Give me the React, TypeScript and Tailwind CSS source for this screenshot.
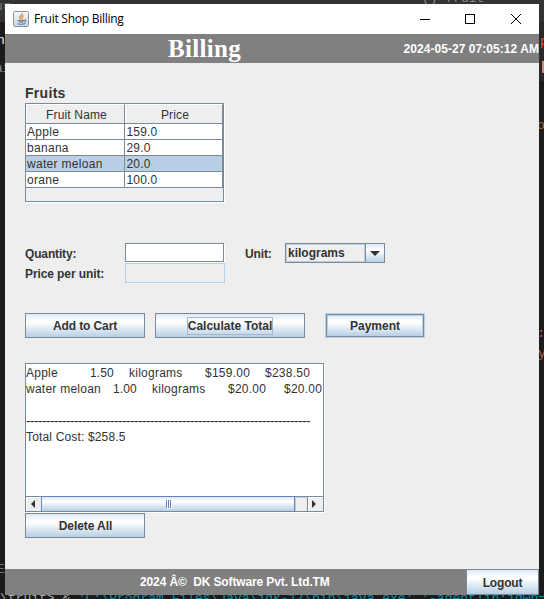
import type { ReactNode } from "react";

const fruits = [
  { name: "Apple", price: "159.0" },
  { name: "banana", price: "29.0" },
  { name: "water meloan", price: "20.0", selected: true },
  { name: "orane", price: "100.0" },
];

const metal = "bg-[linear-gradient(#dde8f3_0%,#ffffff_30%,#ffffff_36%,#b8cfe5_100%)]";

function Button({ className, children }: { className: string; children: ReactNode }) {
  return (
    <button className={`flex items-center justify-center border border-[#7a8a99] font-bold whitespace-nowrap ${metal} ${className}`}>
      {children}
    </button>
  );
}

function JavaIcon() {
  return (
    <svg className="mr-[5px] h-4 w-4" viewBox="0 0 16 16" fill="none">
      <defs>
        <linearGradient id="tile" x1="0" y1="0" x2="0" y2="1">
          <stop offset="0" stopColor="#fafafa" />
          <stop offset="1" stopColor="#cbd5dc" />
        </linearGradient>
      </defs>
      <rect x=".5" y=".5" width="15" height="15" rx="1" fill="url(#tile)" stroke="#8297a6" />
      <path d="M9.3 2.2C9.8 4 6 4.8 6.5 6.4c.2.8 1.4 1.3 1 2.3M10.8 4.6C9 5.4 8.2 6 9 7c.3.5.2 1-.5 1.6" stroke="#e8852d" strokeWidth="1.2" />
      <path d="M4.8 9.2c-1 .6 5 .7 6.5 0M5.6 11h4.8M11.4 9.1c2.3-.3 1.7 1.7 0 2M4.5 12.6c1.5.9 6 .8 8-.1" stroke="#587b98" strokeWidth="1.1" />
    </svg>
  );
}

function TitleBar() {
  return (
    <div className="flex h-[30px] items-center bg-white pl-2 text-black">
      <JavaIcon />
      <span className="grow font-['Open_Sans','Noto_Sans',sans-serif] text-[12px] tracking-[-0.26px]">Fruit Shop Billing</span>
      <svg className="mr-[18px] h-[10px] w-[102px]" viewBox="0 0 102 10" fill="none" stroke="#000" shapeRendering="crispEdges">
        <path d="M1 5.5h10M46.5.5h9v9h-9z" />
        <path d="M92 0l10 10M102 0L92 10" shapeRendering="auto" />
      </svg>
    </div>
  );
}

function FruitTable() {
  return (
    <div className="h-[99px] w-[199px] border border-[#7a8a99] shadow-[1px_1px_0_#fff]">
      <div className="flex h-5 border-b border-[#7a8a99] text-center leading-[21px]">
        <div className="w-[99px] border-t border-r border-l border-t-white border-r-[#7a8a99] border-l-white pl-0.5 tracking-[0.15px]">Fruit Name</div>
        <div className="grow border-t border-r border-l border-t-white border-r-[#7a8a99] border-l-white pl-0.5 tracking-[0.15px]">Price</div>
      </div>
      {fruits.map((f) => (
        <div key={f.name} className={`flex h-4 border-b border-[#7a8a99] leading-4 ${f.selected ? "bg-[#b8cfe5]" : "bg-white"}`}>
          <div className="w-[99px] border-r border-[#7a8a99] pl-px tracking-[0.3px]">{f.name}</div>
          <div className="grow border-r border-[#7a8a99] pl-[1.5px] tracking-[0.15px]">{f.price}</div>
        </div>
      ))}
    </div>
  );
}

function Cart() {
  return (
    <div className="flex h-[149px] w-[299px] flex-col border border-[#7a8a99] bg-white shadow-[1px_1px_0_#fff]">
      <div className="h-[132px] shrink-0 overflow-hidden pt-px leading-4 tracking-[0.25px] whitespace-nowrap">
        <div className="flex h-4">
          <span className="w-[64px]">Apple</span><span className="w-[39px] tracking-[0.1px]">1.50</span><span className="w-[76px]">kilograms</span>
          <span className="w-[60px]">$159.00</span><span>$238.50</span>
        </div>
        <div className="flex h-4">
          <span className="w-[87px]">water meloan</span><span className="w-[39px] tracking-[0.1px]">1.00</span><span className="w-[76px]">kilograms</span>
          <span className="w-[56px]">$20.00</span><span>$20.00</span>
        </div>
        <div className="h-4" />
        <div className="h-4 tracking-[0.004px] [text-shadow:0.5px_0_0_#333]">{"-".repeat(71)}</div>
        <div className="h-4 tracking-[0.16px]">Total Cost: $258.5</div>
      </div>
      <div className="flex h-[15px] border-t border-[#7a8a99] bg-[#eee]">
        <div className="flex w-[15px] items-center justify-center border-t border-l border-white pr-0.5 pb-px">
          <svg className="h-2 w-1" viewBox="0 0 4 8"><path d="M4 0v8L0 4z" fill="#333" /></svg>
        </div>
        <div className="-mt-px flex h-[15px] w-[254px] items-center justify-center gap-px border border-b-0 border-[#6382bf] bg-[linear-gradient(#dde8f3,#ffffff_32%,#b8cfe5)]">
          {[0, 1, 2].map((n) => <i key={n} className="h-2 w-px bg-[#6382bf] shadow-[1px_1px_0_#fff]" />)}
        </div>
        <div className="w-3 border-t border-l border-[#b8cfe5]" />
        <div className="flex grow items-center justify-center border-l border-[#7a8a99] shadow-[inset_1px_1px_0_#fff]">
          <svg className="mr-[3px] mb-px h-2 w-1" viewBox="0 0 4 8"><path d="M0 0v8l4-4z" fill="#333" /></svg>
        </div>
      </div>
    </div>
  );
}

function Desktop() {
  return (
    <div className="absolute inset-0 bg-[#1b1b1b] font-['Liberation_Mono',monospace] text-[13px] leading-none whitespace-pre">
      <div className="h-[22px] bg-[#333]" />
      <div className="absolute top-[22px] right-0 h-[59px] w-2 bg-[#292929]" />
      <div className="absolute top-[0px] left-[-5px] text-[#777]">ur</div>
      <div className="absolute top-[34px] left-[-3px] text-[#eee]">n</div>
      <div className="absolute top-[62px] left-[-5px] text-[#78909c]">ai</div>
      <div className="absolute top-[-8px] left-[422px] text-[#888]">() fruit</div>
      <div className="absolute top-[35px] left-[540px] text-[#e0524c]">p</div>
      <div className="absolute top-[61px] left-[542px] h-3 w-0.5 bg-[#d9827a]" />
      <div className="absolute top-[119px] left-[537px] text-[#b9674c]">o</div>
      <div className="absolute top-[327px] left-[537px] text-[#b9674c]">:</div>
      <div className="absolute top-[347px] left-[538px] text-[#b9674c]">y</div>
      <div className="absolute top-[563px] left-[-3px] text-[#777]">E</div>
      <div className="absolute top-[592px] left-0 text-[#aaa]">{"\\fruit> & "}<span className="text-[#148ba5]">{"'C:\\Program Files\\Java\\jdk-17\\bin\\java.exe' '-agentlib:jdwp=transport"}</span></div>
    </div>
  );
}

export default function App() {
  return (
    <div className="relative h-[599px] w-[544px] overflow-hidden font-['Liberation_Sans',Arial,sans-serif] text-[12px] leading-4 text-[#333]">
      <Desktop />
      <main className="relative mt-1 ml-[5px] flex h-[591px] w-[534px] flex-col bg-[#eee]">
        <TitleBar />
        <header className="flex h-[29px] items-center justify-between bg-[#808080] font-bold text-white">
          <h1 className="pl-[163px] font-['Liberation_Serif',serif] text-[25px] leading-[29px] tracking-[0.3px]">Billing</h1>
          <time className="tracking-[0.05px]">2024-05-27 07:05:12 AM</time>
        </header>
        <div className="flex grow flex-col items-start pl-5">
          <h2 className="mt-[21px] h-[19px] text-[14px] leading-[18px] font-bold tracking-[0.3px]">Fruits</h2>
          <FruitTable />
          <div className="mt-[41px] flex h-5 items-center font-bold">
            <label className="w-[100px] pt-0.5 tracking-[-0.15px]">Quantity:</label>
            <div className="mr-[21px] mb-px h-[19px] w-[99px] border border-[#7a8a99] bg-white shadow-[1px_1px_0_#fff]" />
            <label className="w-10 pt-0.5 tracking-[-0.15px]">Unit:</label>
            <div className="flex h-5 w-[100px] border border-[#7a8a99]">
              <div className="w-[79px] border border-[#b8cfe5] pl-px leading-4">kilograms</div>
              <div className={`flex grow items-center justify-center border-l border-[#7a8a99] ${metal}`}>
                <svg className="h-[5px] w-[10px]" viewBox="0 0 10 5"><path d="M0 0h10L5 5z" fill="#333" /></svg>
              </div>
            </div>
          </div>
          <div className="flex h-5 items-center font-bold">
            <label className="w-[100px] pt-0.5 tracking-[-0.1px]">Price per unit:</label>
            <div className="h-5 w-[100px] border border-[#b8cfe5]" />
          </div>
          <div className="mt-[30px] flex h-[25px]">
            <Button className="mr-2.5 w-[120px] tracking-[-0.1px]">Add to Cart</Button>
            <Button className="mr-5 w-[150px]"><span className="border border-[#a3b8cc] leading-4">Calculate Total</span></Button>
            <div className="w-[100px] border border-[#b8cfe5]"><Button className="h-[23px] w-full shadow-[inset_0_0_0_1px_#b8cfe5]">Payment</Button></div>
          </div>
          <div className="mt-[25px]"><Cart /></div>
          <Button className="mt-px h-[25px] w-[120px] pl-px tracking-[-0.08px]">Delete All</Button>
        </div>
        <footer className="flex h-[26px] items-start justify-between bg-[#808080] font-bold text-white">
          <span className="pl-[135px] leading-[27px] tracking-[-0.12px] whitespace-pre">2024 Â©  DK Software Pvt. Ltd.TM</span>
          <Button className="h-[26px] w-[73px] pt-px tracking-[-0.15px] text-[#333]">Logout</Button>
        </footer>
      </main>
    </div>
  );
}
